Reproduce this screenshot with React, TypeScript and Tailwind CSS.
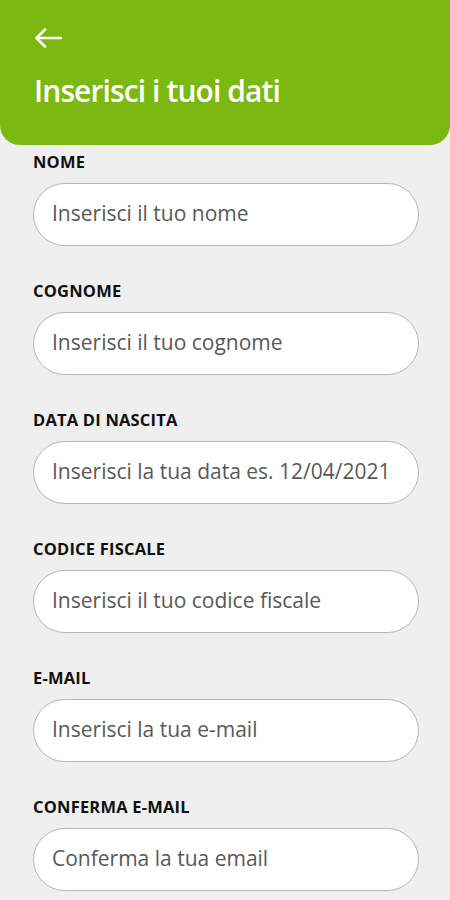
import React from "react";

const fields = [
  { label: "NOME", placeholder: "Inserisci il tuo nome" },
  { label: "COGNOME", placeholder: "Inserisci il tuo cognome" },
  { label: "DATA DI NASCITA", placeholder: "Inserisci la tua data es. 12/04/2021" },
  { label: "CODICE FISCALE", placeholder: "Inserisci il tuo codice fiscale" },
  { label: "E-MAIL", placeholder: "Inserisci la tua e-mail" },
  { label: "CONFERMA E-MAIL", placeholder: "Conferma la tua email" },
];

export default function App() {
  return (
    <div className="min-h-[900px] w-full bg-[#efefef] font-['Open_Sans',sans-serif] overflow-hidden">
      <header className="bg-[#7bb912] rounded-b-[20px] h-[145px] px-[34px] pt-[28px] flex flex-col">
        <button className="w-[28px] h-[20px] flex items-center" aria-label="Indietro">
          <svg width="28" height="20" viewBox="0 0 28 20" fill="none">
            <path d="M27 10H2.5M11 1.5L2.5 10L11 18.5" stroke="white" strokeWidth="2.6" strokeLinecap="round" strokeLinejoin="round" />
          </svg>
        </button>
        <h1 className="mt-[23px] text-white text-[30px] leading-[40px] font-semibold tracking-[-0.9px]">
          Inserisci i tuoi dati
        </h1>
      </header>
      <form className="pt-[7px] pl-[33px] pr-[31px] flex flex-col">
        {fields.map((f) => (
          <div key={f.label} className="flex flex-col pb-[35px]">
            <label className="text-[16.5px] leading-[20px] font-bold text-[#111] tracking-[0.2px]">
              {f.label}
            </label>
            <input
              className="mt-[11px] h-[63px] w-full rounded-full border border-[#b4b4b4] bg-white pl-[18px] pr-[10px] pb-[3px] text-[21px] text-[#444] placeholder:text-[#585858] outline-none"
              placeholder={f.placeholder}
            />
          </div>
        ))}
      </form>
    </div>
  );
}
